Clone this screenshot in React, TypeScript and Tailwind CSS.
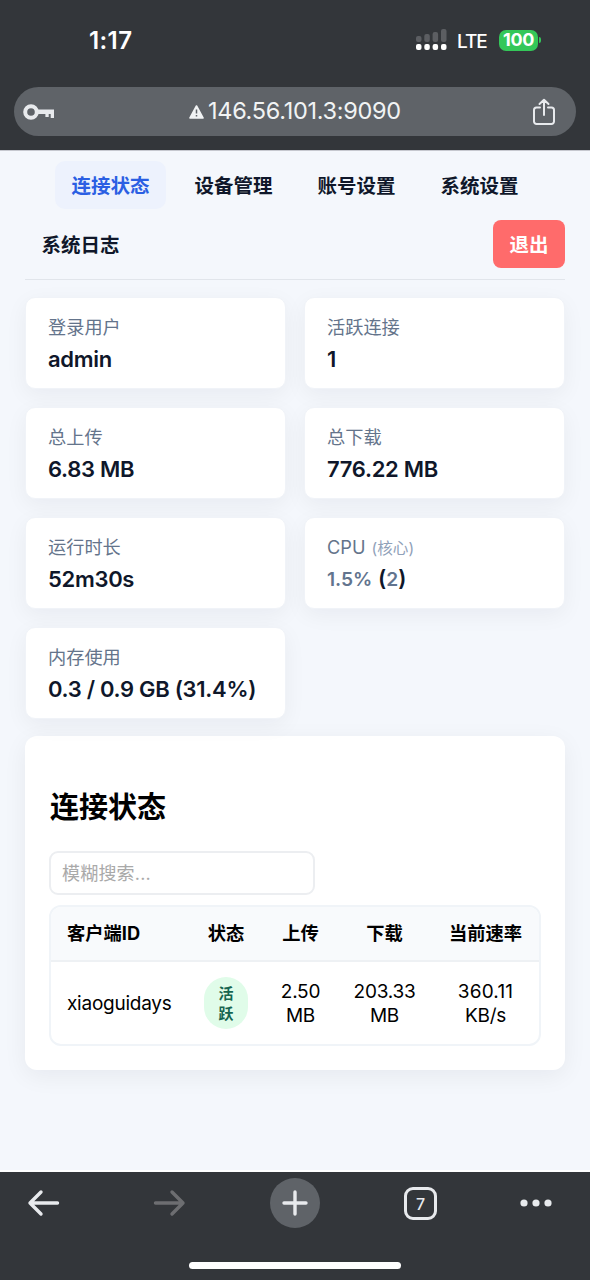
import type { ReactNode } from "react";

const tabs = ["连接状态", "设备管理", "账号设置", "系统设置"];

const stats: { label: ReactNode; value: ReactNode }[] = [
  { label: "登录用户", value: "admin" },
  { label: "活跃连接", value: "1" },
  { label: "总上传", value: "6.83 MB" },
  { label: "总下载", value: "776.22 MB" },
  { label: "运行时长", value: "52m30s" },
  {
    label: (
      <>
        CPU <span className="ml-[1px] text-[15.6px] text-slate-400">(核心)</span>
      </>
    ),
    value: (
      <span className="relative -top-px tracking-[0px]">
        <span className="text-[19.2px] text-slate-500">1.5%</span> (
        <span className="text-[19.2px] text-slate-500">2</span>)
      </span>
    ),
  },
  { label: "内存使用", value: "0.3 / 0.9 GB (31.4%)" },
];

const StatusBar = () => (
  <div className="flex h-[87px] items-start text-white">
    <div className="ml-[89px] mt-[26px] text-[24px] leading-[30px] font-semibold tracking-[0.4px]">1:17</div>
    <div className="ml-auto mr-[49px] mt-[29px] flex h-[22px] items-center">
      <svg width="31" height="22" viewBox="0 0 31 22" fill="none">
        <g fill="#5c5e62">
          <rect x="0" y="7" width="5.5" height="6" rx="2" />
          <rect x="8.3" y="5" width="5.5" height="8" rx="2" />
          <rect x="16.6" y="3" width="5.5" height="10" rx="2" />
          <rect x="25" y="0" width="5.5" height="13" rx="2" />
        </g>
        <g fill="#fff">
          <rect x="0" y="15" width="5.5" height="6" rx="2" />
          <rect x="8.3" y="15" width="5.5" height="6" rx="2" />
          <rect x="16.6" y="15" width="5.5" height="6" rx="2" />
          <rect x="25" y="15" width="5.5" height="6" rx="2" />
        </g>
      </svg>
      <span className="ml-[10px] mt-[3px] w-[30px] text-[19px] leading-[22px] font-medium tracking-[-1px]">LTE</span>
      <div className="ml-[12px] flex h-[21px] w-[39px] items-center justify-center rounded-[7px] bg-[#34c759] text-[18px] leading-none font-bold tracking-[-0.4px]">
        100
      </div>
      <div className="ml-[1px] h-[6px] w-[2px] rounded-r-full bg-[#34c759]" />
    </div>
  </div>
);

const AddressBar = () => (
  <div className="mx-[14px] flex h-[49px] items-center rounded-full bg-[#5f6368] text-[#f1f3f4]">
    <svg className="ml-[9px]" width="32" height="16" viewBox="0 0 32 16" fill="none">
      <circle cx="8" cy="8" r="5.8" stroke="#e8eaed" strokeWidth="4" />
      <path d="M14 5.5h17V14h-3.3v-4h-2v3h-3.3v-3H14z" fill="#e8eaed" />
    </svg>
    <div className="ml-[134px] flex items-center">
      <svg width="15" height="14" viewBox="0 0 15 14">
        <path d="M7.5 1 14 13H1z" fill="#f1f3f4" stroke="#f1f3f4" strokeWidth="1.6" strokeLinejoin="round" />
        <path d="M7.5 4.5v4M7.5 10v1.6" stroke="#5f6368" strokeWidth="1.5" />
      </svg>
      <span className="ml-[4px] -mt-[2px] text-[23.5px] leading-[30px] tracking-[-0.3px] whitespace-nowrap">146.56.101.3:9090</span>
    </div>
    <svg className="ml-auto mr-[20px]" width="24" height="28" viewBox="0 0 24 28" fill="none" stroke="#e8eaed" strokeWidth="2" strokeLinecap="round" strokeLinejoin="round">
      <path d="M8 9.5H4.5A2.5 2.5 0 0 0 2 12v11.5A2.5 2.5 0 0 0 4.5 26h15a2.5 2.5 0 0 0 2.5-2.5V12a2.5 2.5 0 0 0-2.5-2.5H16M12 17V2M7.5 6 12 1.8 16.5 6" />
    </svg>
  </div>
);

const Nav = () => (
  <nav className="flex h-[128px] flex-col gap-[11px] border-b border-[#e1e5eb] pt-[9px] text-[19.5px] font-bold text-[#0f172a]">
    <div className="flex justify-center gap-[12px]">
      {tabs.map((tab, i) => (
        <a
          key={tab}
          className={`flex h-[48px] w-[111px] items-center justify-center rounded-[10px] pt-[3px] ${
            i === 0 ? "bg-[#edf2fd] text-[#2b5fe3]" : ""
          }`}
        >
          {tab}
        </a>
      ))}
    </div>
    <div className="flex items-center justify-between">
      <a className="flex h-[48px] w-[111px] items-center justify-center pt-[3px]">系统日志</a>
      <button className="h-[48px] w-[72px] rounded-[8px] bg-[#ff6b6b] pt-[3px] text-white">退出</button>
    </div>
  </nav>
);

const StatCard = ({ label, value }: { label: ReactNode; value: ReactNode }) => (
  <div className="h-[92px] rounded-[10px] border border-[#f0f3f8] bg-white px-[22px] pt-[15px] shadow-[0_6px_22px_rgba(15,23,42,0.05)]">
    <div className="h-[28px] text-[18.2px] leading-[28px] text-[#64748b]">{label}</div>
    <div className="mt-[2px] h-[32px] text-[22px] leading-[32px] font-semibold tracking-[-0.3px] whitespace-nowrap text-[#0f172a]">
      {value}
    </div>
  </div>
);

const Connections = () => (
  <section className="mt-[17px] h-[334px] rounded-[12px] bg-white px-[25px] shadow-[0_6px_24px_rgba(15,23,42,0.06)]">
    <h2 className="pt-[51px] text-[29px] leading-[42px] font-bold">连接状态</h2>
    <input
      className="mt-[22px] -ml-px block h-[44px] w-[266px] rounded-[9px] border-2 border-[#eceef1] px-[11px] text-[18px] tracking-[0.2px] placeholder:text-[#a9a9a9]"
      placeholder="模糊搜索..."
    />
    <div className="mt-[10px] -ml-px h-[141px] w-[492px] overflow-hidden rounded-[12px] border-2 border-[#f0f4f8]">
      <table className="w-full table-fixed text-center">
        <colgroup>
          <col className="w-[137px]" />
          <col className="w-[76px]" />
          <col className="w-[73px]" />
          <col className="w-[95px]" />
          <col />
        </colgroup>
        <thead>
          <tr className="h-[54px] border-b-2 border-[#eef1f4] bg-[#f8fafc] text-[18.3px]">
            <th className="pt-[1px] pl-[16px] text-left">客户端ID</th>
            <th className="pt-[1px]">状态</th>
            <th className="pt-[1px]">上传</th>
            <th className="pt-[1px]">下载</th>
            <th className="pt-[1px]">当前速率</th>
          </tr>
        </thead>
        <tbody>
          <tr className="h-[83px] text-[19px] leading-[24.5px] tracking-[-0.25px]">
            <td className="pt-[2px] pl-[16px] text-left">xiaoguidays</td>
            <td>
              <span className="mx-auto flex h-[52px] w-[44px] flex-col justify-center rounded-full bg-[#e0fce9] pt-[2px] text-[15px] leading-[20.5px] font-bold text-[#166550]">
                <span>活</span>
                <span>跃</span>
              </span>
            </td>
            <td className="pt-[2px]">2.50<br />MB</td>
            <td className="pt-[2px]">203.33<br />MB</td>
            <td className="pt-[2px]"><span className="tracking-[0.2px]">360.11</span><br />KB/s</td>
          </tr>
        </tbody>
      </table>
    </div>
  </section>
);

const Toolbar = () => (
  <footer className="h-[108px] bg-[#33363a]">
    <div className="flex h-[62px] items-center pl-[27px]">
      <svg width="33" height="28" viewBox="0 0 33 28" fill="none" stroke="#e8eaed" strokeWidth="3.4" strokeLinecap="round" strokeLinejoin="round">
        <path d="M30.5 14H3M14 3 3 14l11 11" />
      </svg>
      <svg className="ml-[93px]" width="33" height="28" viewBox="0 0 33 28" fill="none" stroke="#6d6e71" strokeWidth="3.4" strokeLinecap="round" strokeLinejoin="round">
        <path d="M2.5 14H30M19 3l11 11-11 11" />
      </svg>
      <div className="ml-[84px] flex size-[50px] items-center justify-center rounded-full bg-[#5f6368]">
        <svg width="26" height="26" viewBox="0 0 26 26" stroke="#e8eaed" strokeWidth="3.4" strokeLinecap="round">
          <path d="M13 2v22M2 13h22" />
        </svg>
      </div>
      <div className="ml-[84px] flex size-[33px] items-center justify-center rounded-[9px] border-[3px] border-[#e8eaed] pt-[1px] text-[16px] font-medium text-[#e8eaed]">
        7
      </div>
      <svg className="ml-[83px]" width="32" height="8" viewBox="0 0 32 8" fill="#e8eaed">
        <circle cx="4" cy="4" r="3.6" />
        <circle cx="16" cy="4" r="3.6" />
        <circle cx="28" cy="4" r="3.6" />
      </svg>
    </div>
    <div className="mx-auto mt-[28px] h-[7px] w-[212px] rounded-full bg-white" />
  </footer>
);

export default function App() {
  return (
    <div className="flex h-[1280px] w-[590px] flex-col overflow-hidden bg-[#f4f7fc] font-['Inter','Noto_Sans_CJK_SC',sans-serif] text-black">
      <header className="h-[150px] bg-[#33363a]">
        <StatusBar />
        <AddressBar />
      </header>
      <main className="flex-1 border-t border-b-2 border-t-[#c6c8cf] border-b-white px-[25px] pt-px">
        <Nav />
        <div className="mt-[17px] grid grid-cols-2 gap-[18px]">
          {stats.map((stat, i) => (
            <StatCard key={i} {...stat} />
          ))}
        </div>
        <Connections />
      </main>
      <Toolbar />
    </div>
  );
}
